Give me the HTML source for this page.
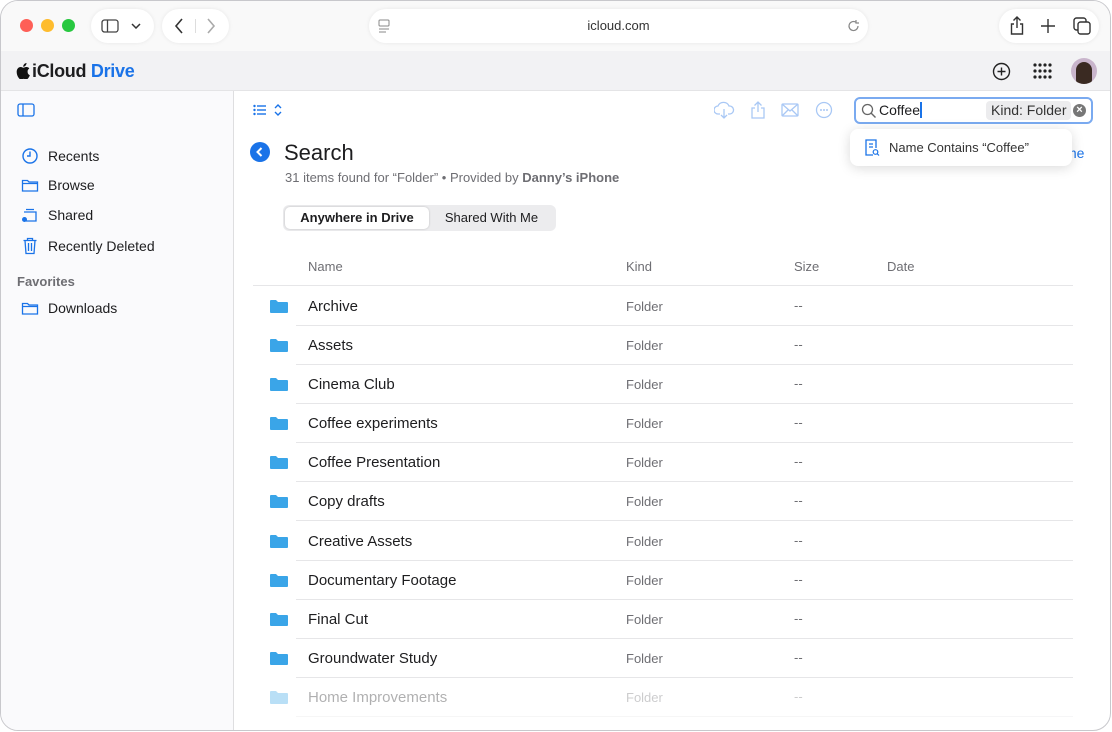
<!DOCTYPE html>
<html><head><meta charset="utf-8"><style>
*{box-sizing:border-box;margin:0;padding:0}
body{width:1112px;height:732px;background:#fff;font-family:"Liberation Sans",sans-serif;color:#1d1d1f;position:relative;overflow:hidden}
.frame{position:absolute;left:0;top:0;width:1111px;height:731px;border:1.5px solid #c8c8cc;border-radius:18px;overflow:hidden;background:#fff}
.top{position:absolute;left:0;top:0;width:100%;height:50px;background:#f9f9f9}
.pill{position:absolute;background:#fff;border-radius:18px;box-shadow:0 0 4px rgba(0,0,0,.08)}
.dot{position:absolute;top:18px;width:13px;height:13px;border-radius:50%}
.hdr{position:absolute;left:0;top:50px;width:100%;height:40px;background:#f2f2f4;border-bottom:1px solid #e4e4e6}
.side{position:absolute;left:0;top:90px;width:233px;height:642px;background:#fafafc;border-right:1px solid #dedee0}
.si{position:absolute;left:20px;font-size:14px;display:flex;align-items:center}
.si svg{margin-right:9px}
.row{position:absolute;left:252px;width:820px;height:39px}
.row .ln{position:absolute;left:43px;right:0;bottom:0;border-bottom:1.5px solid #e6e6e8}
.row .nm{position:absolute;left:55px;top:11px;font-size:15px}
.row .kd{position:absolute;left:373px;top:12px;font-size:13px;color:#6e6e73}
.row .sz{position:absolute;left:541px;top:11px;font-size:13px;color:#6e6e73}
.row svg{position:absolute;left:17px;top:12px}
</style></head><body><div class="frame">
<div class="top">
 <div class="dot" style="left:19px;background:#fe5f57"></div>
 <div class="dot" style="left:40px;background:#febc2e"></div>
 <div class="dot" style="left:61px;background:#28c840"></div>
 <div class="pill" style="left:90px;top:8px;width:63px;height:34px">
  <svg style="position:absolute;left:10px;top:10px" width="18" height="14"><rect x="1" y="1" width="16" height="12" rx="2.5" fill="none" stroke="#444" stroke-width="1.3"/><line x1="6.5" y1="1" x2="6.5" y2="13" stroke="#444" stroke-width="1.3"/></svg>
  <svg style="position:absolute;left:40px;top:14px" width="10" height="6"><path d="M1 1l4 4 4-4" fill="none" stroke="#333" stroke-width="1.5"/></svg>
 </div>
 <div class="pill" style="left:161px;top:8px;width:67px;height:34px">
  <svg style="position:absolute;left:12px;top:9px" width="10" height="16"><path d="M8 1L2 8l6 7" fill="none" stroke="#333" stroke-width="1.6"/></svg>
  <div style="position:absolute;left:33px;top:10px;width:1px;height:14px;background:#ddd"></div>
  <svg style="position:absolute;left:44px;top:9px" width="10" height="16"><path d="M2 1l6 7-6 7" fill="none" stroke="#aaa" stroke-width="1.6"/></svg>
 </div>
 <div class="pill" style="left:368px;top:8px;width:499px;height:34px">
  <svg style="position:absolute;left:9px;top:10px" width="12" height="14"><rect x="1" y="1" width="10" height="6" rx="1" fill="none" stroke="#888"/><line x1="1" y1="10" x2="11" y2="10" stroke="#888"/><line x1="1" y1="13" x2="8" y2="13" stroke="#888"/></svg>
  <div style="position:absolute;left:0;right:0;top:9px;text-align:center;font-size:13px;color:#333">icloud.com</div>
  <svg style="position:absolute;left:478px;top:10px" width="14" height="14"><path d="M11 7a4.5 4.5 0 1 1-2-3.7M9 1v3h3" fill="none" stroke="#888" stroke-width="1.2"/></svg>
 </div>
 <div class="pill" style="left:998px;top:8px;width:100px;height:34px">
  <svg style="position:absolute;left:10px;top:7px" width="16" height="20"><path d="M8 1v11M4.5 4.5L8 1l3.5 3.5M5 8H2.5v10h11V8H11" fill="none" stroke="#333" stroke-width="1.4"/></svg>
  <svg style="position:absolute;left:42px;top:10px" width="14" height="14"><path d="M7 0v14M0 7h14" stroke="#333" stroke-width="1.4"/></svg>
  <svg style="position:absolute;left:74px;top:8px" width="18" height="18"><rect x="1" y="1" width="12" height="12" rx="2.5" fill="none" stroke="#333" stroke-width="1.4"/><rect x="5" y="5" width="12" height="12" rx="2.5" fill="#fff" stroke="#333" stroke-width="1.4"/></svg>
 </div>
</div>
<div class="hdr">
 <svg style="position:absolute;left:15px;top:12px" width="14" height="16" viewBox="0 0 14 16"><path d="M11.6 8.5c0-2 1.6-2.9 1.7-3-0.9-1.4-2.4-1.5-2.9-1.5-1.2-.1-2.4.7-3 .7s-1.6-.7-2.6-.7C3.4 4 2.1 4.8 1.4 6c-1.5 2.6-.4 6.4 1 8.500.7 1 1.500 2.1 2.600 2.100 1-.1 1.400-.7 2.600-.7s1.600.7 2.600.6c1.100 0 1.800-1 2.500-2 .8-1.100 1.100-2.200 1.100-2.300 0 0-2.200-.8-2.200-3.300zM9.600 2.500c.6-.7 1-1.600.9-2.500-.8 0-1.800.5-2.400 1.200-.5.600-1 1.600-.9 2.500.9.100 1.800-.5 2.400-1.200z" fill="#111"/></svg>
 <div style="position:absolute;left:31px;top:10px;font-size:18px;font-weight:bold;letter-spacing:-.3px">iCloud <span style="color:#1a73e8">Drive</span></div>
 <svg style="position:absolute;left:991px;top:11px" width="19" height="19"><circle cx="9.5" cy="9.5" r="8" fill="none" stroke="#222" stroke-width="1.4"/><path d="M9.5 5.5v8M5.5 9.5h8" stroke="#222" stroke-width="1.4"/></svg>
 <svg style="position:absolute;left:1032px;top:12px" width="20" height="16"><g fill="#222"><circle cx="2" cy="2" r="1.6"/><circle cx="7" cy="2" r="1.6"/><circle cx="12" cy="2" r="1.6"/><circle cx="17" cy="2" r="1.6"/><circle cx="2" cy="8" r="1.6"/><circle cx="7" cy="8" r="1.6"/><circle cx="12" cy="8" r="1.6"/><circle cx="17" cy="8" r="1.6"/><circle cx="2" cy="14" r="1.6"/><circle cx="7" cy="14" r="1.6"/><circle cx="12" cy="14" r="1.6"/><circle cx="17" cy="14" r="1.6"/></g></svg>
 <div style="position:absolute;left:1070px;top:7px;width:26px;height:26px;border-radius:50%;background:#c9b5cc;overflow:hidden"><div style="margin:4px auto 0;width:16px;height:22px;border-radius:8px 8px 4px 4px;background:#3a2a22"></div></div>
</div>
<div class="side">
 <svg style="position:absolute;left:16px;top:12px" width="18" height="14"><rect x="1" y="1" width="16" height="12" rx="2" fill="none" stroke="#1a73e8" stroke-width="1.3"/><line x1="6" y1="1" x2="6" y2="13" stroke="#1a73e8" stroke-width="1.3"/></svg>
 <div class="si" style="top:56px"><svg width="18" height="18"><circle cx="9" cy="9" r="7" fill="none" stroke="#1a73e8" stroke-width="1.4"/><path d="M9 4.5V9H6" fill="none" stroke="#1a73e8" stroke-width="1.4"/></svg>Recents</div>
 <div class="si" style="top:86px"><svg width="18" height="16"><path d="M1.5 3.5h5l1.5 1.5h8.5v9h-15z M1.5 6.5h15" fill="none" stroke="#1a73e8" stroke-width="1.3"/></svg>Browse</div>
 <div class="si" style="top:116px"><svg width="18" height="16"><path d="M3 5h12v9H5 M5 2.5h8" fill="none" stroke="#1a73e8" stroke-width="1.3"/><circle cx="3.5" cy="12.5" r="2.5" fill="#1a73e8"/></svg>Shared</div>
 <div class="si" style="top:146px"><svg width="18" height="18"><path d="M2.5 3.5h13M6.5 3.5V1.5h5v2M4 3.5l1 13h8l1-13M7.5 6v8M10.5 6v8" fill="none" stroke="#1a73e8" stroke-width="1.3"/></svg>Recently Deleted</div>
 <div style="position:absolute;left:16px;top:183px;font-size:13px;color:#6e6e73;font-weight:bold">Favorites</div>
 <div class="si" style="top:209px"><svg width="18" height="16"><path d="M1.5 3.5h5l1.5 1.5h8.5v9h-15z M1.5 6.5h15" fill="none" stroke="#1a73e8" stroke-width="1.3"/></svg>Downloads</div>
</div>
<svg style="position:absolute;left:252px;top:102px" width="32" height="14"><g fill="#1a73e8"><circle cx="1.5" cy="3" r="1.2"/><circle cx="1.5" cy="7" r="1.2"/><circle cx="1.5" cy="11" r="1.2"/><rect x="4" y="2.3" width="9" height="1.4"/><rect x="4" y="6.3" width="9" height="1.4"/><rect x="4" y="10.3" width="9" height="1.4"/></g><path d="M22 5l3-3 3 3M22 9l3 3 3-3" fill="none" stroke="#1a73e8" stroke-width="1.4"/></svg>
<svg style="position:absolute;left:713px;top:99px" width="120" height="20"><g fill="none" stroke="#a9c8f5" stroke-width="1.3"><path d="M6 14H4a4 4 0 0 1 0-8 6 6 0 0 1 11 0 4 4 0 0 1 1 8h-2M10 9v9M7 15l3 3 3-3"/><path d="M44 2v10M40.5 5.5L44 2l3.5 3.5M41 8h-3v10h12V8h-3"/><rect x="68" y="4" width="16" height="12" rx="1"/><path d="M68 4l8 7 8-7M68 16l6-6M84 16l-6-6"/><circle cx="110" cy="10" r="7.5"/></g><g fill="#a9c8f5"><circle cx="107" cy="10" r="1"/><circle cx="110" cy="10" r="1"/><circle cx="113" cy="10" r="1"/></g></svg>
<div style="position:absolute;left:853px;top:96px;width:239px;height:27px;border:2.5px solid #7aaaf0;border-radius:6px;background:#fff">
 <svg style="position:absolute;left:5px;top:4px" width="16" height="16"><circle cx="6.5" cy="6.5" r="5" fill="none" stroke="#666" stroke-width="1.3"/><path d="M10 10l4.5 4.5" stroke="#666" stroke-width="1.4"/></svg>
 <div style="position:absolute;left:23px;top:3px;font-size:14px">Coffee<span style="display:inline-block;width:1.5px;height:16px;background:#1a73e8;vertical-align:-3px"></span></div>
 <div style="position:absolute;left:130px;top:2px;height:19px;padding:0 5px;background:#ececee;border-radius:4px;font-size:14px;line-height:19px;color:#333">Kind: Folder</div>
 <div style="position:absolute;left:217px;top:5px;width:13px;height:13px;border-radius:50%;background:#777;color:#fff;font-size:11px;line-height:13px;text-align:center;font-weight:bold">×</div>
</div>
<div style="position:absolute;left:1064px;top:144px;font-size:14px;color:#1a73e8">me</div>
<div style="position:absolute;left:849px;top:128px;width:222px;height:37px;background:#fff;border-radius:8px;box-shadow:0 2px 12px rgba(0,0,0,.15)">
 <svg style="position:absolute;left:14px;top:10px" width="16" height="18"><path d="M9 16H2V1h10v8" fill="none" stroke="#1a73e8" stroke-width="1.3"/><path d="M5 5h4M5 8h4" stroke="#1a73e8" stroke-width="1.2"/><circle cx="11.5" cy="13" r="2.3" fill="none" stroke="#1a73e8" stroke-width="1.2"/><path d="M13 14.5l2 2" stroke="#1a73e8" stroke-width="1.2"/></svg>
 <div style="position:absolute;left:39px;top:11px;font-size:13px;color:#333">Name Contains “Coffee”</div>
</div>
<div style="position:absolute;left:249px;top:141px;width:20px;height:20px;border-radius:50%;background:#1a73e8"><svg width="20" height="20"><path d="M11.5 6l-4 4 4 4" fill="none" stroke="#fff" stroke-width="2"/></svg></div>
<div style="position:absolute;left:283px;top:139px;font-size:22px">Search</div>
<div style="position:absolute;left:284px;top:169px;font-size:13px;color:#6e6e73">31 items found for “Folder” • Provided by <b>Danny’s iPhone</b></div>
<div style="position:absolute;left:282px;top:204px;width:273px;height:26px;background:#ececee;border-radius:6px">
 <div style="position:absolute;left:2px;top:2px;width:144px;height:22px;background:#fff;border-radius:5px;box-shadow:0 0 2px rgba(0,0,0,.2);text-align:center;font-size:13px;font-weight:bold;line-height:22px">Anywhere in Drive</div>
 <div style="position:absolute;left:146px;top:2px;width:125px;text-align:center;font-size:13px;line-height:22px">Shared With Me</div>
</div>
<div style="position:absolute;left:307px;top:258px;font-size:13px;color:#6e6e73">Name</div>
<div style="position:absolute;left:625px;top:258px;font-size:13px;color:#6e6e73">Kind</div>
<div style="position:absolute;left:793px;top:258px;font-size:13px;color:#6e6e73">Size</div>
<div style="position:absolute;left:886px;top:258px;font-size:13px;color:#6e6e73">Date</div>
<div style="position:absolute;left:252px;top:284px;width:820px;border-top:1.5px solid #e6e6e8"></div>
<div class="row" style="top:286px"><svg width="18" height="14"><path d="M0 2a1 1 0 0 1 1-1h5l2 2h9a1 1 0 0 1 1 1v9a1 1 0 0 1-1 1H1a1 1 0 0 1-1-1z" fill="#3aa5e8"/></svg><div class="nm">Archive</div><div class="kd">Folder</div><div class="sz">--</div><div class="ln"></div></div>
<div class="row" style="top:325px"><svg width="18" height="14"><path d="M0 2a1 1 0 0 1 1-1h5l2 2h9a1 1 0 0 1 1 1v9a1 1 0 0 1-1 1H1a1 1 0 0 1-1-1z" fill="#3aa5e8"/></svg><div class="nm">Assets</div><div class="kd">Folder</div><div class="sz">--</div><div class="ln"></div></div>
<div class="row" style="top:364px"><svg width="18" height="14"><path d="M0 2a1 1 0 0 1 1-1h5l2 2h9a1 1 0 0 1 1 1v9a1 1 0 0 1-1 1H1a1 1 0 0 1-1-1z" fill="#3aa5e8"/></svg><div class="nm">Cinema Club</div><div class="kd">Folder</div><div class="sz">--</div><div class="ln"></div></div>
<div class="row" style="top:403px"><svg width="18" height="14"><path d="M0 2a1 1 0 0 1 1-1h5l2 2h9a1 1 0 0 1 1 1v9a1 1 0 0 1-1 1H1a1 1 0 0 1-1-1z" fill="#3aa5e8"/></svg><div class="nm">Coffee experiments</div><div class="kd">Folder</div><div class="sz">--</div><div class="ln"></div></div>
<div class="row" style="top:442px"><svg width="18" height="14"><path d="M0 2a1 1 0 0 1 1-1h5l2 2h9a1 1 0 0 1 1 1v9a1 1 0 0 1-1 1H1a1 1 0 0 1-1-1z" fill="#3aa5e8"/></svg><div class="nm">Coffee Presentation</div><div class="kd">Folder</div><div class="sz">--</div><div class="ln"></div></div>
<div class="row" style="top:481px"><svg width="18" height="14"><path d="M0 2a1 1 0 0 1 1-1h5l2 2h9a1 1 0 0 1 1 1v9a1 1 0 0 1-1 1H1a1 1 0 0 1-1-1z" fill="#3aa5e8"/></svg><div class="nm">Copy drafts</div><div class="kd">Folder</div><div class="sz">--</div><div class="ln"></div></div>
<div class="row" style="top:521px"><svg width="18" height="14"><path d="M0 2a1 1 0 0 1 1-1h5l2 2h9a1 1 0 0 1 1 1v9a1 1 0 0 1-1 1H1a1 1 0 0 1-1-1z" fill="#3aa5e8"/></svg><div class="nm">Creative Assets</div><div class="kd">Folder</div><div class="sz">--</div><div class="ln"></div></div>
<div class="row" style="top:560px"><svg width="18" height="14"><path d="M0 2a1 1 0 0 1 1-1h5l2 2h9a1 1 0 0 1 1 1v9a1 1 0 0 1-1 1H1a1 1 0 0 1-1-1z" fill="#3aa5e8"/></svg><div class="nm">Documentary Footage</div><div class="kd">Folder</div><div class="sz">--</div><div class="ln"></div></div>
<div class="row" style="top:599px"><svg width="18" height="14"><path d="M0 2a1 1 0 0 1 1-1h5l2 2h9a1 1 0 0 1 1 1v9a1 1 0 0 1-1 1H1a1 1 0 0 1-1-1z" fill="#3aa5e8"/></svg><div class="nm">Final Cut</div><div class="kd">Folder</div><div class="sz">--</div><div class="ln"></div></div>
<div class="row" style="top:638px"><svg width="18" height="14"><path d="M0 2a1 1 0 0 1 1-1h5l2 2h9a1 1 0 0 1 1 1v9a1 1 0 0 1-1 1H1a1 1 0 0 1-1-1z" fill="#3aa5e8"/></svg><div class="nm">Groundwater Study</div><div class="kd">Folder</div><div class="sz">--</div><div class="ln"></div></div>
<div class="row" style="top:677px;opacity:.35"><svg width="18" height="14"><path d="M0 2a1 1 0 0 1 1-1h5l2 2h9a1 1 0 0 1 1 1v9a1 1 0 0 1-1 1H1a1 1 0 0 1-1-1z" fill="#3aa5e8"/></svg><div class="nm">Home Improvements</div><div class="kd">Folder</div><div class="sz">--</div><div class="ln"></div></div>
</div></body></html>
